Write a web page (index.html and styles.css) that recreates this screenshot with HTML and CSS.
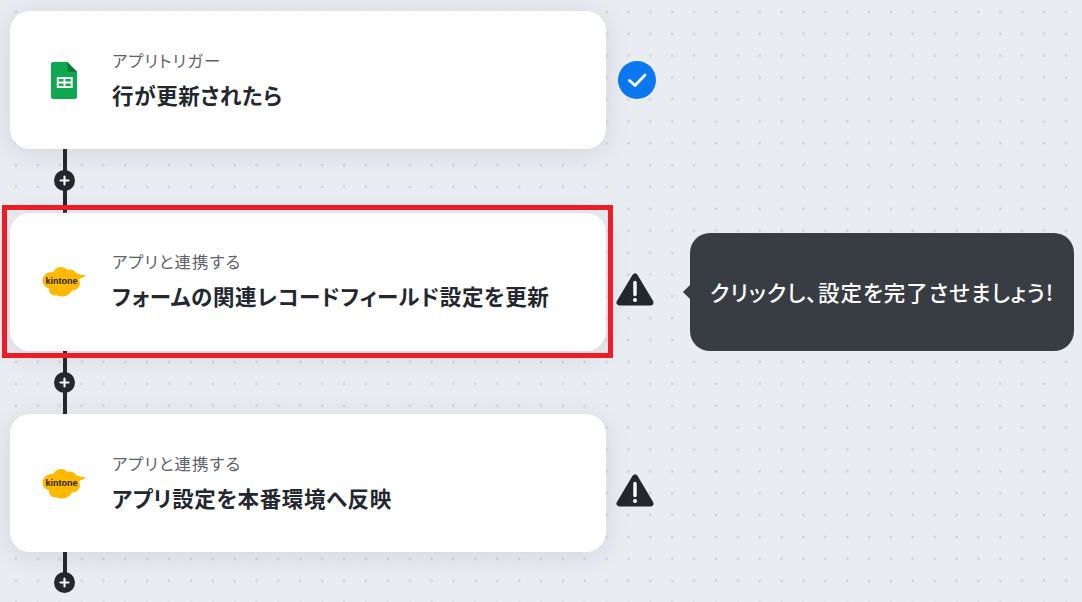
FILE: index.html
```html
<!DOCTYPE html>
<html lang="ja">
<head>
<meta charset="utf-8">
<title>Flow</title>
<link rel="stylesheet" href="styles.css">
</head>
<body>
<main class="flow">
  <section class="step">
    <div class="card">
      <div class="card-icon">
        <svg width="26" height="37" viewBox="0 0 27 37" preserveAspectRatio="none"><path d="M2 0h15l10 10v25a2 2 0 0 1-2 2H2a2 2 0 0 1-2-2V2a2 2 0 0 1 2-2z" fill="#0da84f"/><path d="M17 0l10 10h-8a2 2 0 0 1-2-2z" fill="#0a7a3a"/><path d="M6 15h16.500v11H6z" fill="#fff"/><path d="M8 17h5v2.500H8zM15 17h5.500v2.500H15zM8 21.500h5V24H8zM15 21.500h5.500V24H15z" fill="#0da84f"/></svg>
      </div>
      <div class="card-text">
        <p class="sub">アプリトリガー</p>
        <h2 class="title">行が更新されたら</h2>
      </div>
    </div>
    <svg class="status" width="38" height="38" viewBox="0 0 38 38"><circle cx="19" cy="19" r="19" fill="#0a78f0"/><path d="M11.500 19.500l5.500 5 10-10.500" fill="none" stroke="#fff" stroke-width="2.800" stroke-linecap="round" stroke-linejoin="round"/></svg>
  </section>

  <div class="connector"><svg width="21" height="21" viewBox="0 0 21 21"><circle cx="10.500" cy="10.500" r="10.500" fill="#23272e"/><path d="M10.500 6.500v8M6.500 10.500h8" stroke="#fff" stroke-width="2.100" stroke-linecap="round"/></svg></div>

  <section class="step">
    <div class="card card-selected">
      <div class="card-icon">
        <svg class="kintone" width="46" height="33" viewBox="-1 -1 46 33"><g fill="#ffb900"><ellipse cx="10" cy="14.500" rx="9.500" ry="8.500"/><ellipse cx="19" cy="9.500" rx="8.500" ry="8.500"/><ellipse cx="28" cy="10" rx="7" ry="6.500"/><ellipse cx="30.500" cy="17" rx="7.500" ry="7.500"/><ellipse cx="20" cy="20" rx="11" ry="10.500"/><ellipse cx="13" cy="23.500" rx="6" ry="6"/><path d="M34 7c3.500 1.500 6.500 2 10 2.500-3 2-6 3.500-9 4z"/></g><text class="kintone-text" x="19.500" y="17.500">kintone</text></svg>
      </div>
      <div class="card-text">
        <p class="sub">アプリと連携する</p>
        <h2 class="title">フォームの関連レコードフィールド設定を更新</h2>
      </div>
      <div class="selection"></div>
    </div>
    <svg class="status warn" width="38" height="34" viewBox="0 0 38 34"><path d="M19 3.500L3.500 29.500h31z" fill="#23272e" stroke="#23272e" stroke-width="6" stroke-linejoin="round"/><path d="M19 9.500v12" stroke="#fff" stroke-width="3.400" stroke-linecap="round"/><circle cx="19" cy="27" r="2" fill="#fff"/></svg>
    <div class="tooltip">クリックし、設定を完了させましょう!</div>
  </section>

  <div class="connector"><svg width="21" height="21" viewBox="0 0 21 21"><circle cx="10.500" cy="10.500" r="10.500" fill="#23272e"/><path d="M10.500 6.500v8M6.500 10.500h8" stroke="#fff" stroke-width="2.100" stroke-linecap="round"/></svg></div>

  <section class="step">
    <div class="card">
      <div class="card-icon">
        <svg class="kintone" width="46" height="33" viewBox="-1 -1 46 33"><g fill="#ffb900"><ellipse cx="10" cy="14.500" rx="9.500" ry="8.500"/><ellipse cx="19" cy="9.500" rx="8.500" ry="8.500"/><ellipse cx="28" cy="10" rx="7" ry="6.500"/><ellipse cx="30.500" cy="17" rx="7.500" ry="7.500"/><ellipse cx="20" cy="20" rx="11" ry="10.500"/><ellipse cx="13" cy="23.500" rx="6" ry="6"/><path d="M34 7c3.500 1.500 6.500 2 10 2.500-3 2-6 3.500-9 4z"/></g><text class="kintone-text" x="19.500" y="17.500">kintone</text></svg>
      </div>
      <div class="card-text">
        <p class="sub">アプリと連携する</p>
        <h2 class="title">アプリ設定を本番環境へ反映</h2>
      </div>
    </div>
    <svg class="status warn" width="38" height="34" viewBox="0 0 38 34"><path d="M19 3.500L3.500 29.500h31z" fill="#23272e" stroke="#23272e" stroke-width="6" stroke-linejoin="round"/><path d="M19 9.500v12" stroke="#fff" stroke-width="3.400" stroke-linecap="round"/><circle cx="19" cy="27" r="2" fill="#fff"/></svg>
  </section>

  <div class="connector connector-end"><svg width="21" height="21" viewBox="0 0 21 21"><circle cx="10.500" cy="10.500" r="10.500" fill="#23272e"/><path d="M10.500 6.500v8M6.500 10.500h8" stroke="#fff" stroke-width="2.100" stroke-linecap="round"/></svg></div>
</main>
</body>
</html>
```
FILE: styles.css
```css
html, body {
  margin: 0;
  height: 100%;
  overflow: hidden;
}

body {
  background-color: #e9ecf1;
  background-image: radial-gradient(circle at center, #cfd3d9 1.2px, transparent 1.7px);
  background-size: 21.875px 21.875px;
  background-position: 5px 1px;
  font-family: "Noto Sans CJK JP", "Noto Sans", sans-serif;
  font-feature-settings: "palt";
  color: #23272e;
}

.flow {
  display: flex;
  flex-direction: column;
  padding: 11px 0 0 10px;
}

.step {
  display: flex;
  align-items: center;
  height: 138px;
}

.card {
  position: relative;
  box-sizing: border-box;
  width: 596px;
  height: 138px;
  display: flex;
  align-items: center;
  background: #fff;
  border-radius: 20px;
  box-shadow: 0 4px 26px rgba(40, 50, 70, 0.11);
}

.card-icon {
  width: 46px;
  margin: 0 25px 0 31px;
  display: flex;
  justify-content: center;
  flex: none;
}

.card-icon svg {
  display: block;
}

.card-text {
  padding-bottom: 5px;
}

.sub {
  margin: 0;
  font-size: 16.400px;
  line-height: 22px;
  letter-spacing: 1.100px;
  color: #5d6168;
}

.title {
  margin: 12px 0 0;
  font-size: 21.500px;
  line-height: 24px;
  font-weight: 700;
  letter-spacing: 0.600px;
  color: #23272e;
}

.kintone-text {
  font-family: "Liberation Sans", sans-serif;
  font-size: 9px;
  font-weight: 700;
  fill: #2a2000;
  text-anchor: middle;
}

.selection {
  position: absolute;
  left: -8px;
  top: -7.500px;
  width: 611px;
  height: 153px;
  box-sizing: border-box;
  border: 5px solid #ee1c25;
  pointer-events: none;
}

.status {
  flex: none;
  margin-left: 12px;
}

.status.warn {
  margin: 16px 0 0 10px;
}

.tooltip {
  position: relative;
  align-self: flex-end;
  box-sizing: border-box;
  width: 384px;
  height: 118px;
  margin-left: 36px;
  padding-bottom: 1px;
  display: flex;
  align-items: center;
  justify-content: center;
  background: #383c43;
  border-radius: 20px;
  color: #fff;
  font-size: 21.500px;
  font-weight: 500;
  letter-spacing: 1px;
  white-space: nowrap;
}

.tooltip::before {
  content: "";
  position: absolute;
  left: -5px;
  top: 54px;
  width: 10px;
  height: 10px;
  background: #383c43;
  transform: rotate(45deg);
}

.connector {
  width: 21px;
  height: 63.500px;
  margin-left: 44px;
  display: flex;
  align-items: center;
  justify-content: center;
  background: linear-gradient(#23272e, #23272e) center / 4px 100% no-repeat;
}

.connector-end {
  height: 41px;
  align-items: flex-end;
  background-size: 4px 25px;
  background-position: center top;
}
```
